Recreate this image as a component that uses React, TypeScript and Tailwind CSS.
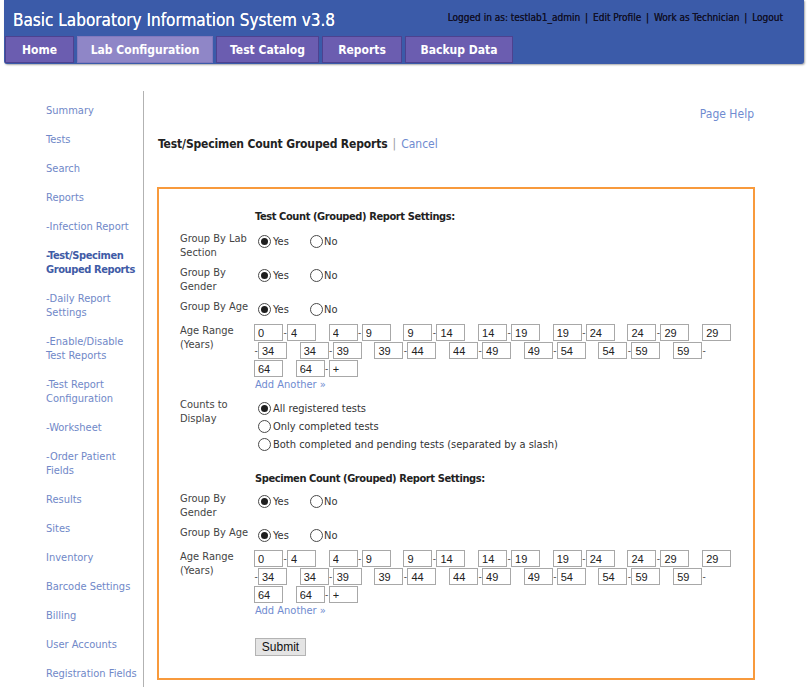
import React from "react";

const sideLinks: { lines: string[]; active?: boolean }[] = [
  { lines: ["Summary"] },
  { lines: ["Tests"] },
  { lines: ["Search"] },
  { lines: ["Reports"] },
  { lines: ["-Infection Report"] },
  { lines: ["-Test/Specimen", "Grouped Reports"], active: true },
  { lines: ["-Daily Report", "Settings"] },
  { lines: ["-Enable/Disable", "Test Reports"] },
  { lines: ["-Test Report", "Configuration"] },
  { lines: ["-Worksheet"] },
  { lines: ["-Order Patient", "Fields"] },
  { lines: ["Results"] },
  { lines: ["Sites"] },
  { lines: ["Inventory"] },
  { lines: ["Barcode Settings"] },
  { lines: ["Billing"] },
  { lines: ["User Accounts"] },
  { lines: ["Registration Fields"] },
];

const tabs = [
  { name: "Home", w: "w-[69px]" },
  { name: "Lab Configuration", w: "w-[136px]", active: true },
  { name: "Test Catalog", w: "w-[103px]" },
  { name: "Reports", w: "w-[80px]" },
  { name: "Backup Data", w: "w-[108px]" },
];

const ageRows = [
  "0-4 4-9 9-14 14-19 19-24 24-29 29",
  "-34 34-39 39-44 44-49 49-54 54-59 59-",
  "64 64-+",
];

function Radio({ checked }: { checked?: boolean }) {
  return (
    <span className="flex h-[13px] w-[13px] shrink-0 items-center justify-center rounded-full border border-[#4a4a4a] bg-white">
      {checked && <span className="h-[7px] w-[7px] rounded-full bg-[#1e1e1e]" />}
    </span>
  );
}

function YesNo() {
  return (
    <div className="flex h-[18px] items-center">
      <span className="flex w-[55px] items-center">
        <span className="ml-[3px]">
          <Radio checked />
        </span>
        <span className="ml-[2px] pt-[2px]">Yes</span>
      </span>
      <Radio />
      <span className="ml-[1px] pt-[2px]">No</span>
    </div>
  );
}

function AgeBox({ value }: { value: string }) {
  return (
    <input
      readOnly
      defaultValue={value}
      className="h-[17px] w-[29px] border border-[#a8a8a8] bg-white px-[3px] font-['Liberation_Sans',Arial,sans-serif] text-[11px] leading-none text-[#222] outline-none"
    />
  );
}

function AgeRanges() {
  return (
    <div className="-ml-[1px]">
      {ageRows.map((row, r) => (
        <div key={r} className="flex h-[18px] items-start">
          {row.split(" ").map((seg, s) => (
            <React.Fragment key={s}>
              {s > 0 && <span className="w-[12.7px] shrink-0" />}
              {seg.split("-").map((part, i) => (
                <React.Fragment key={i}>
                  {i > 0 && (
                    <span className="w-[4px] text-center text-[10px] leading-[17px] text-[#555]">-</span>
                  )}
                  {part && <AgeBox value={part} />}
                </React.Fragment>
              ))}
            </React.Fragment>
          ))}
        </div>
      ))}
      <div className="ml-[1px] leading-[14px] text-[#6f8bd0]">Add Another »</div>
    </div>
  );
}

function Row({ label, children, className = "" }: { label: React.ReactNode; children: React.ReactNode; className?: string }) {
  return (
    <div className={`flex items-start ${className}`}>
      <div className="w-[75px] shrink-0 leading-[14px] text-[#444]">{label}</div>
      <div className="text-[#333]">{children}</div>
    </div>
  );
}

export default function App() {
  return (
    <div className="min-h-[687px] w-[811px] overflow-hidden bg-white font-['DejaVu_Sans_Condensed','Liberation_Sans',sans-serif] text-[11px]">
      <header className="ml-[4px] flex h-[64px] w-[800px] flex-col rounded-b-[3px] bg-[#3b5ba9] shadow-[1px_1px_2px_rgba(0,0,0,0.35)]">
        <div className="flex h-[36px] items-start justify-between">
          <h1 className="pl-[9px] pt-[10px] text-[17px] leading-[21px] text-white [text-shadow:0_0_0.5px_#fff]">
            Basic Laboratory Information System v3.8
          </h1>
          <div className="pr-[21px] pt-[12px] text-[10px] leading-[12px] text-[#111128] [text-shadow:0_0_0.4px_#111128]">
            Logged in as: testlab1_admin <span className="mx-[2px]">|</span> Edit Profile{" "}
            <span className="mx-[2px]">|</span> Work as Technician <span className="mx-[2px]">|</span> Logout
          </div>
        </div>
        <nav className="flex h-[27px] gap-[3px] pl-[1px]">
          {tabs.map((t) => (
            <div
              key={t.name}
              className={`${t.w} flex items-center justify-center border text-[12px] font-bold text-white ${
                t.active ? "border-[#8178bd] bg-[#8f86c7]" : "border-[#4d4290] bg-[#6b5db0]"
              }`}
            >
              {t.name}
            </div>
          ))}
        </nav>
      </header>

      <div className="flex">
        <aside className="w-[143px] shrink-0 pl-[46px] pt-[40px]">
          {sideLinks.map((l, i) => (
            <div
              key={i}
              className={`mb-[15px] leading-[14px] ${
                l.active ? "font-bold tracking-[-0.4px] text-[#3f5ba6]" : "text-[#7088c8]"
              }`}
            >
              {l.lines.map((line, j) => (
                <div key={j}>{line}</div>
              ))}
            </div>
          ))}
        </aside>

        <main className="mt-[27px] w-[611px] border-l border-[#b2b2b2] pl-[13px]">
          <div className="mt-[15px] text-right text-[12px] leading-[16px] text-[#6f8bd0]">Page Help</div>
          <div className="ml-[1px] mt-[15px] text-[12px] leading-[14px]">
            <span className="font-bold tracking-[-0.15px] text-[#222]">Test/Specimen Count Grouped Reports</span>
            <span className="mx-[5px] text-[#999]">|</span>
            <span className="text-[#6f8bd0]">Cancel</span>
          </div>

          <div className="mt-[36px] w-[598px] border-2 border-[#f89a3c] px-[21px] pb-[21px] pt-[21px]">
            <div className="ml-[75px] font-bold leading-[14px] tracking-[-0.4px] text-[#222]">
              Test Count (Grouped) Report Settings:
            </div>

            <Row className="mt-[8px]" label={<>Group By Lab<br />Section</>}>
              <YesNo />
            </Row>
            <Row className="mt-[6px]" label={<>Group By<br />Gender</>}>
              <YesNo />
            </Row>
            <Row className="mt-[6px]" label="Group By Age">
              <YesNo />
            </Row>
            <Row className="mt-[6px]" label={<>Age Range<br />(Years)</>}>
              <AgeRanges />
            </Row>
            <Row className="mt-[6px]" label={<>Counts to<br />Display</>}>
              <div className="pt-[1px]">
                {["All registered tests", "Only completed tests", "Both completed and pending tests (separated by a slash)"].map(
                  (opt, i) => (
                    <div key={opt} className="flex h-[18px] items-center">
                      <span className="ml-[3px]">
                        <Radio checked={i === 0} />
                      </span>
                      <span className="ml-[2px] pt-[2px]">{opt}</span>
                    </div>
                  )
                )}
              </div>
            </Row>

            <div className="ml-[75px] mt-[19px] font-bold leading-[14px] tracking-[-0.4px] text-[#222]">
              Specimen Count (Grouped) Report Settings:
            </div>
            <Row className="mt-[6px]" label={<>Group By<br />Gender</>}>
              <YesNo />
            </Row>
            <Row className="mt-[6px]" label="Group By Age">
              <YesNo />
            </Row>
            <Row className="mt-[6px]" label={<>Age Range<br />(Years)</>}>
              <AgeRanges />
            </Row>

            <button className="ml-[75px] mt-[20px] h-[18px] w-[51px] border border-[#b3b3b3] bg-[#e4e4e4] font-['Liberation_Sans',Arial,sans-serif] text-[12px] leading-none text-[#111]">
              Submit
            </button>
          </div>
        </main>
      </div>
    </div>
  );
}
